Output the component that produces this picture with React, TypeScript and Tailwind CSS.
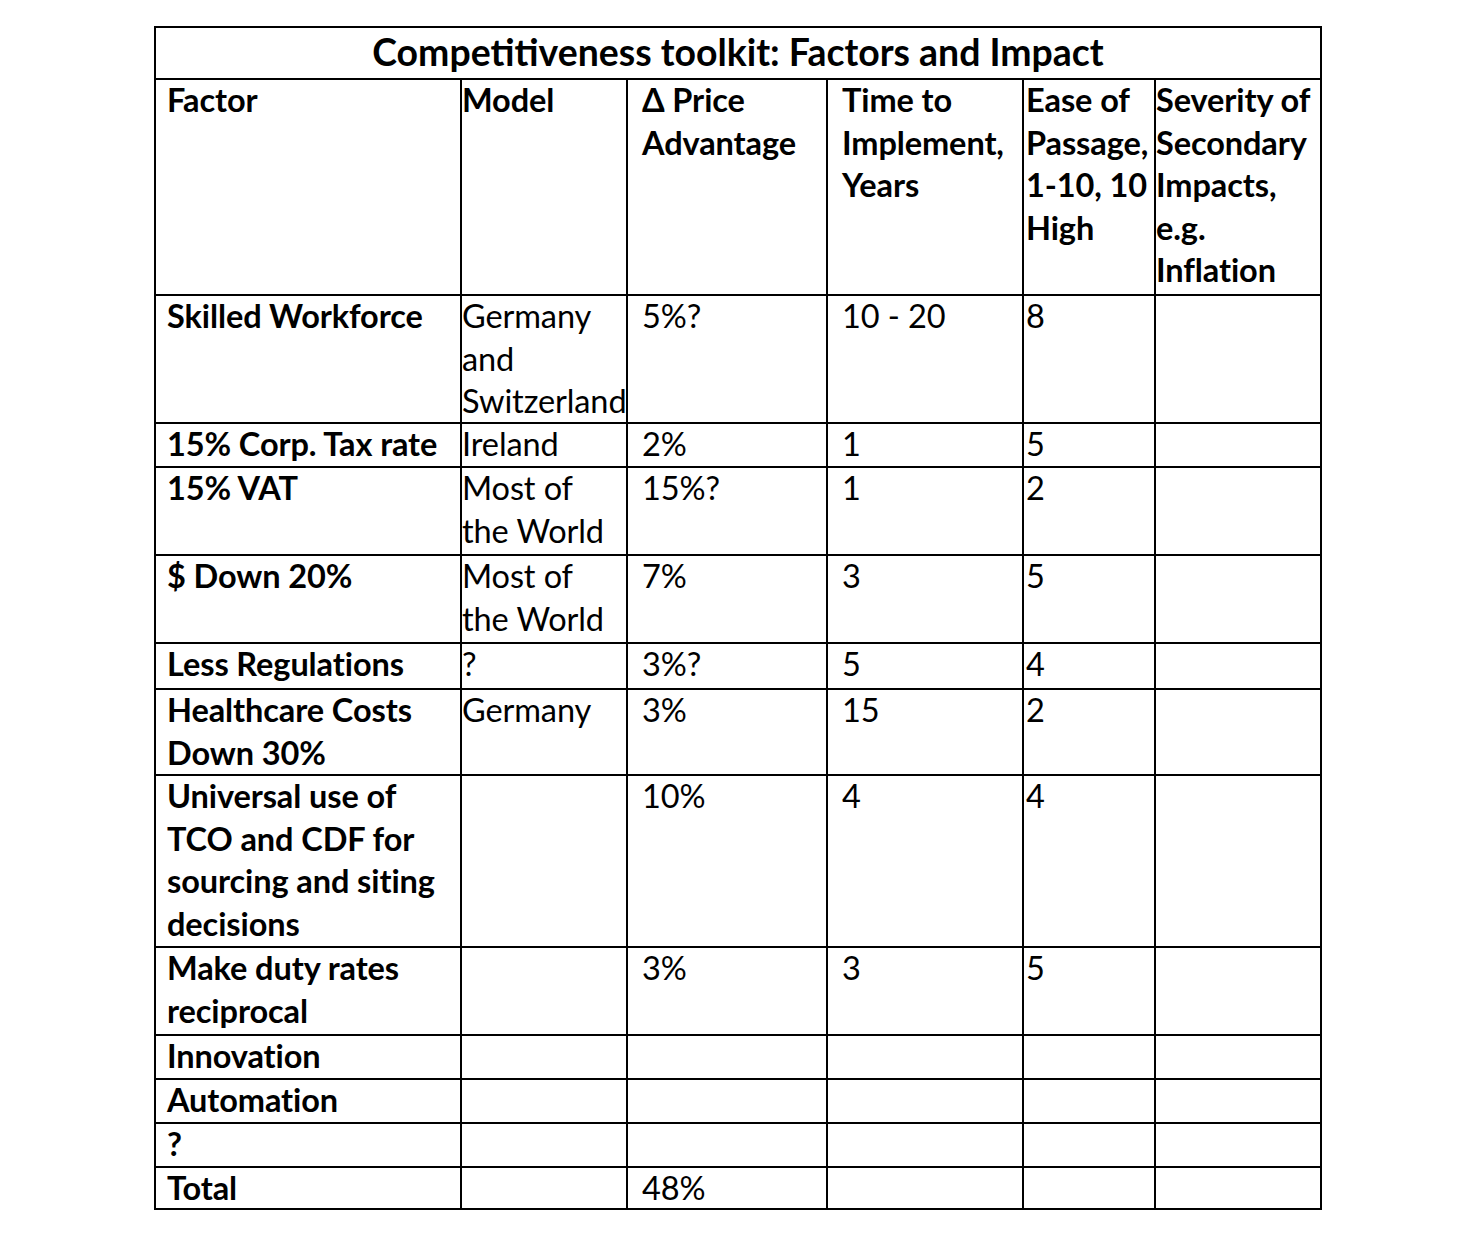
import React from "react";

const colPad = ["pl-[11px]", "pl-0", "pl-[14px]", "pl-[14px]", "pl-[2px]", "pl-0"];

const header: string[][] = [
  ["Factor"],
  ["Model"],
  ["\u0394 Price", "Advantage"],
  ["Time to", "Implement,", "Years"],
  ["Ease of", "Passage,", "1-10, 10", "High"],
  ["Severity of", "Secondary", "Impacts,", "e.g.", "Inflation"],
];

const rows: string[][][] = [
  [["Skilled Workforce"], ["Germany", "and", "Switzerland"], ["5%?"], ["10 - 20"], ["8"], []],
  [["15% Corp. Tax rate"], ["Ireland"], ["2%"], ["1"], ["5"], []],
  [["15% VAT"], ["Most of", "the World"], ["15%?"], ["1"], ["2"], []],
  [["$ Down 20%"], ["Most of", "the World"], ["7%"], ["3"], ["5"], []],
  [["Less Regulations"], ["?"], ["3%?"], ["5"], ["4"], []],
  [["Healthcare Costs", "Down 30%"], ["Germany"], ["3%"], ["15"], ["2"], []],
  [["Universal use of", "TCO and CDF for", "sourcing and siting", "decisions"], [], ["10%"], ["4"], ["4"], []],
  [["Make duty rates", "reciprocal"], [], ["3%"], ["3"], ["5"], []],
  [["Innovation"], [], [], [], [], []],
  [["Automation"], [], [], [], [], []],
  [["?"], [], [], [], [], []],
  [["Total"], [], ["48%"], [], [], []],
];

function CellView({ lines, bold, col }: { lines: string[]; bold?: boolean; col: number }) {
  return (
    <div
      className={`border-r-2 border-b-2 border-black overflow-visible whitespace-nowrap leading-[42.5px] text-[32.5px] tracking-[-0.1px] text-black ${colPad[col]} ${bold ? "font-bold" : "font-normal"}`}
    >
      <div className="-mt-[1px]">
        {lines.map((l, i) => (
          <div key={i}>{l}</div>
        ))}
      </div>
    </div>
  );
}

export default function App() {
  return (
    <div className="w-[1480px] h-[1244px] bg-white" style={{ fontFamily: "Lato, 'Open Sans', sans-serif" }}>
      <div className="pt-[26px] pl-[154px]">
        <div className="grid w-fit border-l-2 border-t-2 border-black grid-cols-[306px_166px_200px_196px_132px_166px] grid-rows-[52px_216px_128px_44px_88px_88px_46px_86px_172px_88px_44px_44px_44px_42px]">
          <div className="col-span-6 border-r-2 border-b-2 border-black text-center font-bold text-[37.4px] leading-[50px] text-black">
            <div className="-mt-[1px]">Competitiveness toolkit: Factors and Impact</div>
          </div>
          {header.map((h, i) => (
            <CellView key={`h${i}`} lines={h} bold col={i} />
          ))}
          {rows.map((r, ri) =>
            r.map((c, ci) => <CellView key={`${ri}-${ci}`} lines={c} bold={ci === 0} col={ci} />)
          )}
        </div>
      </div>
    </div>
  );
}
